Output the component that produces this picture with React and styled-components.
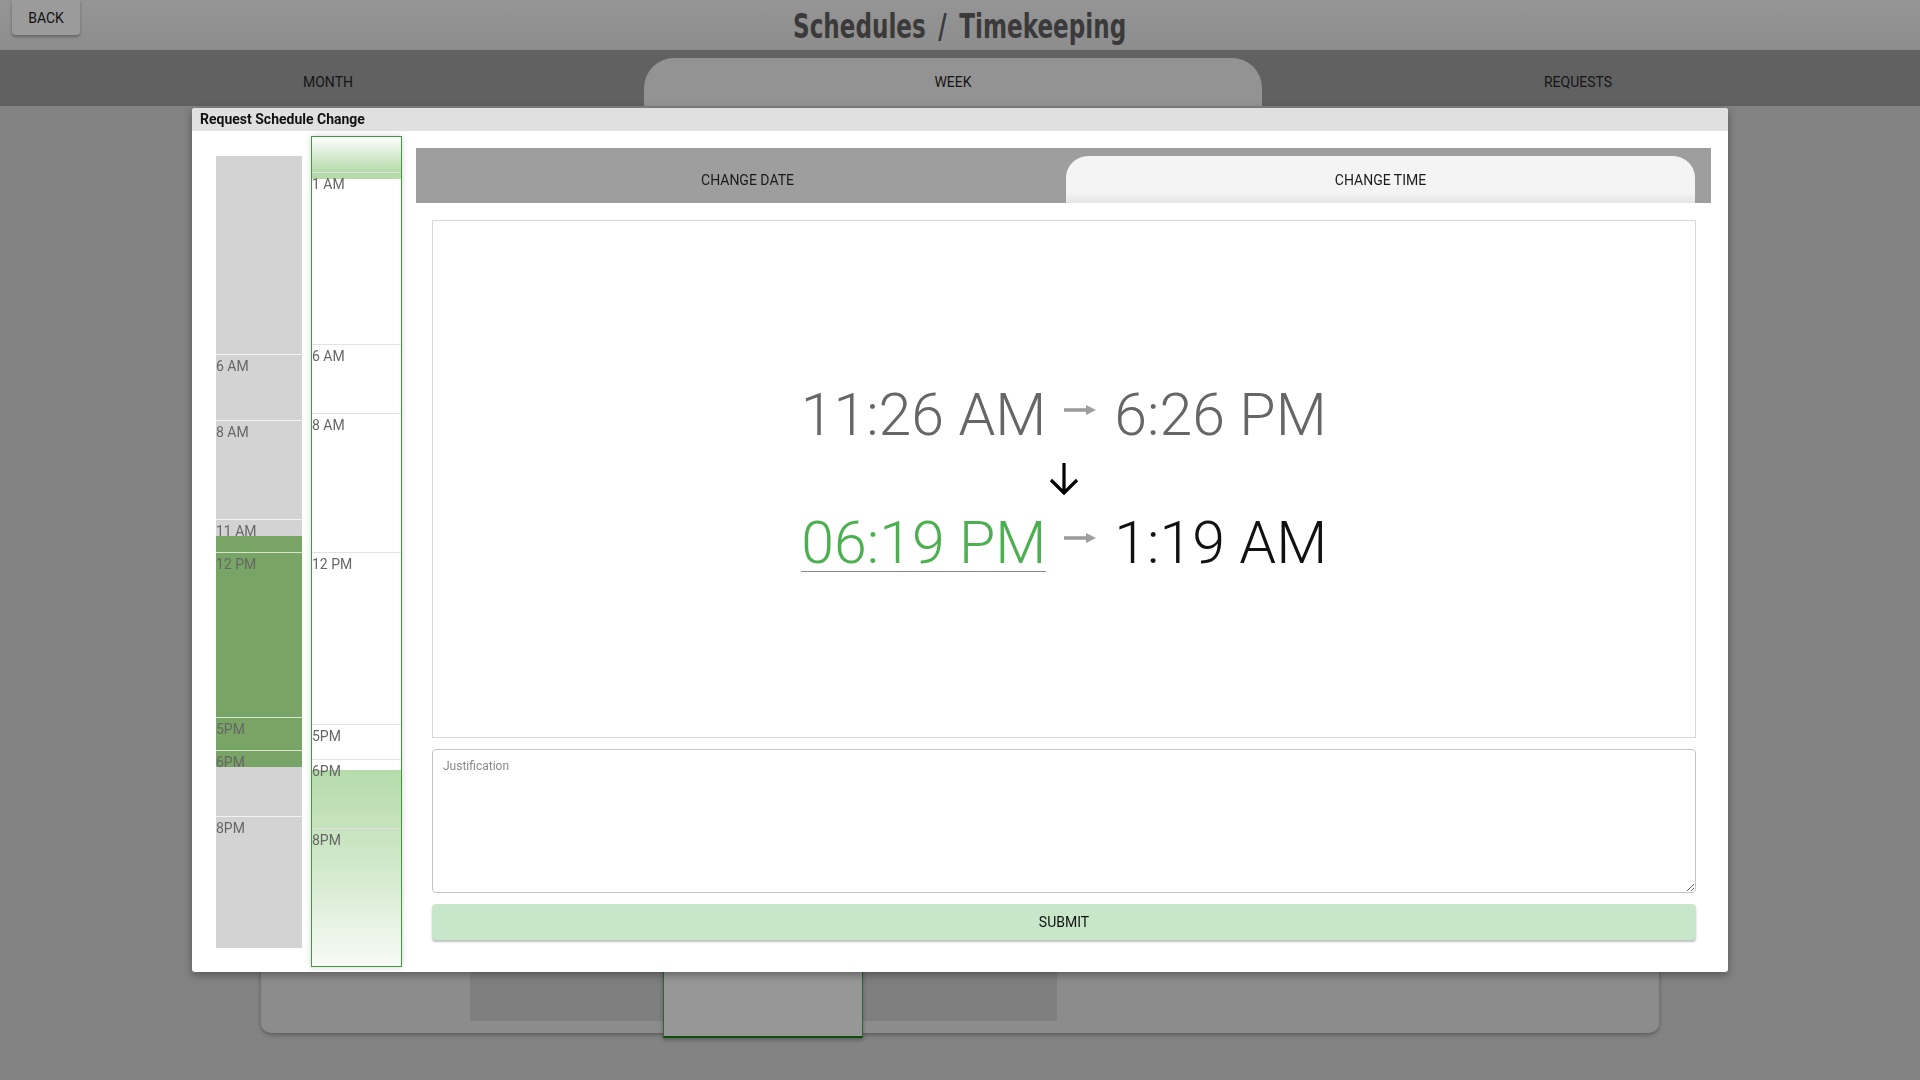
import React from "react";
import styled, { createGlobalStyle } from "styled-components";

const GlobalStyle = createGlobalStyle`
  html, body {
    margin: 0;
    padding: 0;
  }
  body {
    font-family: Roboto, "Liberation Sans", sans-serif;
    background: #838383;
    overflow: hidden;
  }
  * {
    box-sizing: border-box;
  }
`;

const oldShift = {
  hourHeight: 33,
  marks: [
    { h: 6, label: "6 AM" },
    { h: 8, label: "8 AM" },
    { h: 11, label: "11 AM" },
    { h: 12, label: "12 PM" },
    { h: 17, label: "5PM" },
    { h: 18, label: "6PM" },
    { h: 20, label: "8PM" },
  ],
  blocks: [{ from: 11.5, to: 18.5, bg: "#78a465" }],
};

const newShift = {
  hourHeight: 829 / 24,
  marks: [
    { h: 1, label: "1 AM" },
    { h: 6, label: "6 AM" },
    { h: 8, label: "8 AM" },
    { h: 12, label: "12 PM" },
    { h: 17, label: "5PM" },
    { h: 18, label: "6PM" },
    { h: 20, label: "8PM" },
  ],
  blocks: [
    { from: 0, to: 1.22, bg: "linear-gradient(#ffffff 0%, #b6dbab 82%, #b6dbab 100%)" },
    { from: 18.32, to: 24, bg: "linear-gradient(#b6dbab 0%, #cfe7c8 45%, #f7faf6 100%)" },
  ],
};

function Timeline({ data, outlined }) {
  return (
    <TimeColumn $outlined={outlined}>
      {data.blocks.map((b, i) => (
        <ShiftBlock
          key={i}
          style={{
            top: b.from * data.hourHeight,
            height: (b.to - b.from) * data.hourHeight,
            background: b.bg,
          }}
        />
      ))}
      {data.marks.map((m) => (
        <HourMark key={m.label} $outlined={outlined} style={{ top: m.h * data.hourHeight }}>
          {m.label}
        </HourMark>
      ))}
    </TimeColumn>
  );
}

const RightArrow = () => (
  <svg width="32" height="12" viewBox="0 0 32 12">
    <rect x="0" y="4.2" width="23" height="3.6" fill="#9e9e9e" />
    <polygon points="22,1 32,6 22,11" fill="#9e9e9e" />
  </svg>
);

const DownArrow = () => (
  <svg width="30" height="32" viewBox="0 0 30 32">
    <path d="M15 0 V30 M2 17 L15 30 L28 17" fill="none" stroke="#000" strokeWidth="3.2" />
  </svg>
);

export default function App() {
  return (
    <Page>
      <GlobalStyle />
      <Header>
        <BackButton>BACK</BackButton>
        <Title>Schedules / Timekeeping</Title>
        <span />
      </Header>
      <Nav>
        <NavTab>MONTH</NavTab>
        <NavTab $active>WEEK</NavTab>
        <NavTab>REQUESTS</NavTab>
      </Nav>
      <Card>
        <WeekStrip>
          <DayColumn />
        </WeekStrip>
      </Card>

      <Modal>
        <ModalTitle>Request Schedule Change</ModalTitle>
        <ModalBody>
          <OldColumnWrap>
            <Timeline data={oldShift} />
          </OldColumnWrap>
          <Timeline data={newShift} outlined />
          <RightPanel>
            <TabStrip>
              <StripTab>CHANGE DATE</StripTab>
              <StripTab $active>CHANGE TIME</StripTab>
            </TabStrip>
            <PanelContent>
              <TimeBox>
                <TimeGrid>
                  <TimeText $color="#666" $align="end">11:26 AM</TimeText>
                  <ArrowCell><RightArrow /></ArrowCell>
                  <TimeText $color="#666" $align="start">6:26 PM</TimeText>
                  <DownCell><DownArrow /></DownCell>
                  <TimeInput>06:19 PM</TimeInput>
                  <ArrowCell><RightArrow /></ArrowCell>
                  <TimeText $color="#111" $align="start">1:19 AM</TimeText>
                </TimeGrid>
              </TimeBox>
              <Justification placeholder="Justification" />
              <SubmitButton>SUBMIT</SubmitButton>
            </PanelContent>
          </RightPanel>
        </ModalBody>
      </Modal>
    </Page>
  );
}

const Page = styled.div`
  width: 1920px;
  height: 1080px;
  background: #838383;
  overflow: hidden;
`;

const Header = styled.header`
  height: 50px;
  display: grid;
  grid-template-columns: 1fr auto 1fr;
  background: linear-gradient(#959595, #8d8d8d);
`;

const BackButton = styled.button`
  justify-self: start;
  margin-left: 12px;
  width: 68px;
  height: 35px;
  border: none;
  border-radius: 0 0 4px 4px;
  background: #9b9b9b;
  box-shadow: 0 2px 3px rgba(0, 0, 0, 0.3);
  font-family: Roboto, sans-serif;
  font-size: 14px;
  color: #111;
  padding: 0;
`;

/* no condensed display face offline, so squeeze a condensed bold */
const Title = styled.h1`
  margin: 0;
  align-self: center;
  font-family: "DejaVu Sans Condensed", "DejaVu Sans", sans-serif;
  font-stretch: condensed;
  font-weight: 700;
  font-size: 34px;
  color: #3a3a3a;
  word-spacing: 6px;
  padding-top: 2px;
  transform: scaleX(0.755);
`;

const Nav = styled.nav`
  height: 56px;
  background: #616161;
  display: flex;
  align-items: flex-end;
  gap: 7px;
  padding: 0 33px 0 19px;
`;

const NavTab = styled.div`
  flex: 1;
  height: 48px;
  display: flex;
  align-items: center;
  justify-content: center;
  border-radius: 30px 30px 0 0;
  background: ${(p) => (p.$active ? "#939393" : "transparent")};
  font-size: 14px;
  color: #151515;
`;

const Card = styled.div`
  margin: 24px 261px 0;
  height: 903px;
  background: #8c8c8c;
  border-radius: 10px;
  box-shadow: 0 2px 4px rgba(0, 0, 0, 0.3);
  display: flex;
  padding: 0 0 12px 209px;
`;

const WeekStrip = styled.div`
  width: 587px;
  background: #7f7f7f;
  display: flex;
  padding-left: 193px;
`;

const DayColumn = styled.div`
  width: 200px;
  margin-bottom: -17px;
  background: #979797;
  border: 1px solid #2a6a2a;
  border-bottom: 2px solid #0e4f0e;
  box-shadow: 0 2px 4px rgba(0, 0, 0, 0.3);
`;

const Modal = styled.div`
  position: fixed;
  top: 108px;
  left: 192px;
  width: 1536px;
  height: 864px;
  background: #fff;
  border-radius: 3px;
  box-shadow: 0 3px 8px rgba(0, 0, 0, 0.35);
  overflow: hidden;
  display: flex;
  flex-direction: column;
`;

const ModalTitle = styled.div`
  height: 23px;
  line-height: 23px;
  padding-left: 8px;
  background: #e0e0e0;
  font-size: 14px;
  font-weight: 700;
  color: #111;
`;

const ModalBody = styled.div`
  flex: 1;
  display: flex;
  align-items: flex-start;
  padding: 5px 17px 5px 24px;
`;

const OldColumnWrap = styled.div`
  margin: 20px 9px 0 0;
  width: 86px;
  height: 792px;
  display: flex;
`;

const TimeColumn = styled.div`
  position: relative;
  flex: none;
  width: ${(p) => (p.$outlined ? "91px" : "86px")};
  height: ${(p) => (p.$outlined ? "831px" : "792px")};
  background: ${(p) => (p.$outlined ? "#fff" : "#d3d3d3")};
  border: ${(p) => (p.$outlined ? "1px solid #3f9a3a" : "none")};
  box-shadow: ${(p) => (p.$outlined ? "0 0 6px rgba(0, 0, 0, 0.18)" : "none")};
  overflow: hidden;
`;

const ShiftBlock = styled.div`
  position: absolute;
  left: 0;
  right: 0;
`;

const HourMark = styled.div`
  position: absolute;
  left: 0;
  right: 0;
  border-top: 1px solid ${(p) => (p.$outlined ? "#e2e2e2" : "rgba(255, 255, 255, 0.7)")};
  padding-top: 3px;
  font-size: 14px;
  line-height: 16px;
  color: #666;
  white-space: nowrap;
`;

const RightPanel = styled.div`
  flex: 1;
  margin: 12px 0 0 14px;
  display: flex;
  flex-direction: column;
`;

const TabStrip = styled.div`
  height: 55px;
  background: #9e9e9e;
  display: flex;
  align-items: flex-end;
  gap: 4px;
  padding: 0 16px 0 17px;
`;

const StripTab = styled.div`
  flex: 1;
  height: 47px;
  display: flex;
  align-items: center;
  justify-content: center;
  border-radius: 22px 22px 0 0;
  background: ${(p) => (p.$active ? "linear-gradient(#f4f4f4 78%, #e4e4e4)" : "transparent")};
  font-size: 14px;
  color: #1a1a1a;
`;

const PanelContent = styled.div`
  display: flex;
  flex-direction: column;
  gap: 11px;
  padding: 17px 15px 0 16px;
`;

const TimeBox = styled.div`
  height: 518px;
  border: 1px solid #d8d8d8;
  display: flex;
  align-items: center;
  justify-content: center;
`;

const TimeGrid = styled.div`
  display: grid;
  grid-template-columns: auto 32px auto;
  column-gap: 18px;
  align-items: start;
  font-size: 59px;
  font-weight: 300;
  line-height: 70px;
`;

const TimeText = styled.div`
  justify-self: ${(p) => p.$align};
  color: ${(p) => p.$color};
  white-space: nowrap;
`;

const ArrowCell = styled.div`
  height: 70px;
  display: flex;
  align-items: center;
  padding-bottom: 10px;
`;

const DownCell = styled.div`
  grid-column: 1 / -1;
  justify-self: center;
  height: 58px;
  display: flex;
  align-items: center;
`;

const TimeInput = styled.div`
  justify-self: end;
  height: 64px;
  color: #4caf50;
  border-bottom: 1px solid #888;
  white-space: nowrap;
`;

const Justification = styled.textarea`
  height: 144px;
  border: 1px solid #c4c4c4;
  border-radius: 4px;
  padding: 9px 10px;
  font-family: Roboto, sans-serif;
  font-size: 12px;
  resize: vertical;
  &::placeholder {
    color: #8a8a8a;
  }
`;

const SubmitButton = styled.button`
  height: 36px;
  border: none;
  border-radius: 4px;
  background: #c8e6c9;
  box-shadow: 0 2px 2px rgba(0, 0, 0, 0.25);
  font-family: Roboto, sans-serif;
  font-size: 14px;
  color: #111;
`;
